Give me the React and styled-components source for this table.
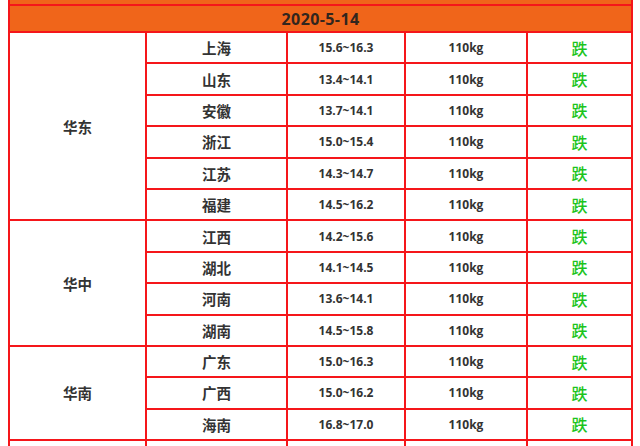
import React from 'react';
import styled, { createGlobalStyle } from 'styled-components';

const GlobalStyle = createGlobalStyle`
  body {
    margin: 0;
    background: #fff;
    font-family: "Open Sans", "Noto Sans CJK SC", sans-serif;
  }
`;

const regions = [
  {
    name: '华东',
    rows: [
      ['上海', '15.6~16.3'],
      ['山东', '13.4~14.1'],
      ['安徽', '13.7~14.1'],
      ['浙江', '15.0~15.4'],
      ['江苏', '14.3~14.7'],
      ['福建', '14.5~16.2'],
    ],
  },
  {
    name: '华中',
    rows: [
      ['江西', '14.2~15.6'],
      ['湖北', '14.1~14.5'],
      ['河南', '13.6~14.1'],
      ['湖南', '14.5~15.8'],
    ],
  },
  {
    name: '华南',
    rows: [
      ['广东', '15.0~16.3'],
      ['广西', '15.0~16.2'],
      ['海南', '16.8~17.0'],
    ],
  },
  {
    name: '',
    rows: [['', '']],
  },
];

function App() {
  return (
    <>
      <GlobalStyle />
      <Page>
        <Table>
          <colgroup>
            <col style={{ width: 137 }} />
            <col style={{ width: 141 }} />
            <col style={{ width: 118 }} />
            <col style={{ width: 122 }} />
            <col style={{ width: 105 }} />
          </colgroup>
          <tbody>
            <StripRow>
              <HeadCell colSpan={5} />
            </StripRow>
            <HeadRow>
              <HeadCell colSpan={5}>2020-5-14</HeadCell>
            </HeadRow>
            {regions.map((region, ri) =>
              region.rows.map(([prov, price], i) => (
                <Row key={`${ri}-${i}`}>
                  {i === 0 && <Cell rowSpan={region.rows.length}>{region.name}</Cell>}
                  <Cell>{prov}</Cell>
                  <NumCell>{price}</NumCell>
                  <NumCell>{prov ? '110kg' : ''}</NumCell>
                  <Cell $fall>{prov ? '跌' : ''}</Cell>
                </Row>
              ))
            )}
          </tbody>
        </Table>
      </Page>
    </>
  );
}

const Page = styled.div`
  padding-left: 8px;
  width: 640px;
  height: 446px;
  overflow: hidden;
  box-sizing: border-box;
`;

const Table = styled.table`
  border-collapse: collapse;
  table-layout: fixed;
  width: 625px;
  color: #333;
  font-weight: 700;

  td {
    border: 2px solid #f5161a;
    padding: 0;
    text-align: center;
    vertical-align: middle;
  }
`;

const StripRow = styled.tr`
  height: 5px;
  td {
    border-top: 0;
  }
`;

const HeadRow = styled.tr`
  height: 27px;
`;

const HeadCell = styled.td`
  background: #f0651a;
  font-size: 16px;
  color: #32261e;
  letter-spacing: 0.4px;
`;

const Row = styled.tr`
  height: 31.4px;
`;

const Cell = styled.td`
  font-size: ${(p) => (p.$fall ? '16px' : '14.5px')};
  font-family: "Noto Sans CJK SC", sans-serif;
  color: ${(p) => (p.$fall ? '#1cc41c' : '#333')};
  font-weight: ${(p) => (p.$fall ? 500 : 700)};
`;

const NumCell = styled.td`
  font-size: 12px;
`;

export default App;
